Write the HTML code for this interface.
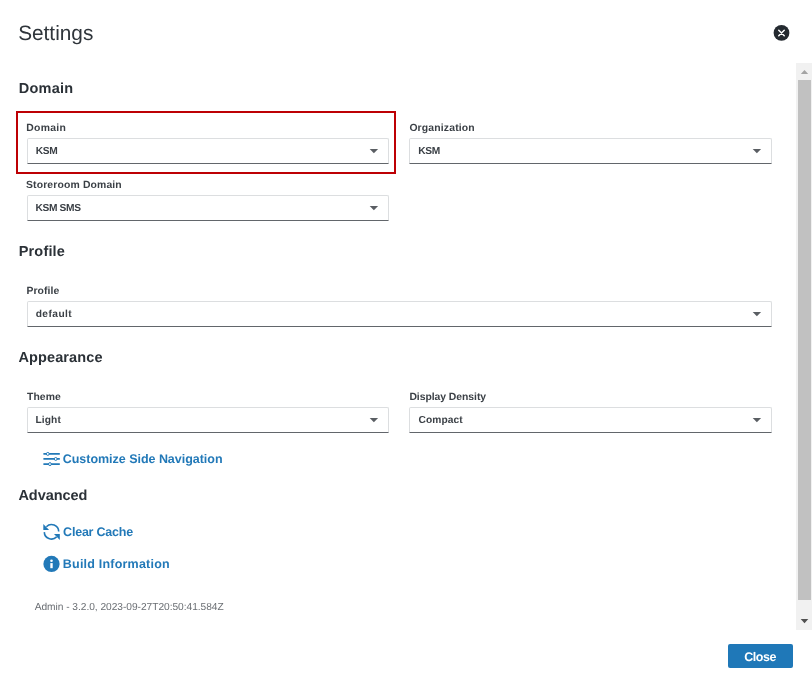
<!DOCTYPE html>
<html lang="en">
<head>
<meta charset="utf-8">
<title>Settings</title>
<style>
html,body{margin:0;padding:0;background:#fff}
body{width:812px;height:692px;position:relative;overflow:hidden;font-family:"Liberation Sans", Arial, sans-serif;-webkit-font-smoothing:antialiased;text-rendering:geometricPrecision}
.t{position:absolute;display:block;white-space:nowrap;margin:0;padding:0;text-decoration:none;cursor:default}
#txt{position:absolute;left:0;top:0;width:812px;height:692px;will-change:transform}
.sel{position:absolute;height:26px;box-sizing:border-box;background:#fff;border:1px solid #dcdee0;border-bottom:1px solid #62666b;border-radius:2px 2px 0 0}
#hl{position:absolute;left:16px;top:111px;width:380px;height:63px;box-sizing:border-box;border:2px solid #bd0004}
#track{position:absolute;left:796px;top:63px;width:16px;height:567px;background:#f1f1f1}
#thumb{position:absolute;left:798px;top:80px;width:13px;height:520px;background:#c1c1c1}
#btn{position:absolute;left:728px;top:644px;width:65px;height:24px;background:#1f78b8;border-radius:2px}
svg{position:absolute;overflow:visible}
#t_title{left:18.15px;top:20.00px;font-size:20.8px;line-height:27px;font-weight:400;color:#2f353b;letter-spacing:0.004px}
#h_domain{left:18.78px;top:79.00px;font-size:14.5px;line-height:20px;font-weight:700;color:#2b3137;letter-spacing:0.252px}
#h_profile{left:18.71px;top:242.00px;font-size:14.5px;line-height:20px;font-weight:700;color:#2b3137;letter-spacing:0.169px}
#h_appear{left:18.45px;top:347.80px;font-size:14.5px;line-height:20px;font-weight:700;color:#2b3137;letter-spacing:0.111px}
#h_adv{left:18.45px;top:485.70px;font-size:14.5px;line-height:20px;font-weight:700;color:#2b3137;letter-spacing:-0.053px}
#l_domain{left:26.22px;top:121.00px;font-size:10.4px;line-height:15px;font-weight:700;color:#3b4046;letter-spacing:0.320px}
#l_org{left:409.38px;top:121.00px;font-size:10.4px;line-height:15px;font-weight:700;color:#3b4046;letter-spacing:0.166px}
#l_store{left:26.00px;top:178.00px;font-size:10.4px;line-height:15px;font-weight:700;color:#3b4046;letter-spacing:0.146px}
#l_profile{left:26.43px;top:284.00px;font-size:10.4px;line-height:15px;font-weight:700;color:#3b4046;letter-spacing:0.098px}
#l_theme{left:27.00px;top:390.00px;font-size:10.4px;line-height:15px;font-weight:700;color:#3b4046;letter-spacing:0.088px}
#l_density{left:409.43px;top:390.00px;font-size:10.4px;line-height:15px;font-weight:700;color:#3b4046;letter-spacing:-0.052px}
#v_domain{left:35.73px;top:143.90px;font-size:10.2px;line-height:15px;font-weight:700;color:#3b4046;letter-spacing:-0.300px}
#v_org{left:418.16px;top:143.90px;font-size:10.2px;line-height:15px;font-weight:700;color:#3b4046;letter-spacing:-0.300px}
#v_store{left:35.46px;top:200.90px;font-size:10.2px;line-height:15px;font-weight:700;color:#3b4046;letter-spacing:-0.325px}
#v_profile{left:35.66px;top:306.90px;font-size:10.2px;line-height:15px;font-weight:700;color:#3b4046;letter-spacing:0.446px}
#v_theme{left:35.46px;top:412.90px;font-size:10.2px;line-height:15px;font-weight:700;color:#3b4046;letter-spacing:0.108px}
#v_density{left:418.52px;top:412.90px;font-size:10.2px;line-height:15px;font-weight:700;color:#3b4046;letter-spacing:0.085px}
#a_custom{left:62.77px;top:450.00px;font-size:12.5px;line-height:18px;font-weight:700;color:#2279b8;letter-spacing:-0.029px}
#a_clear{left:63.08px;top:522.80px;font-size:12.5px;line-height:18px;font-weight:700;color:#2279b8;letter-spacing:-0.215px}
#a_build{left:62.81px;top:554.90px;font-size:12.5px;line-height:18px;font-weight:700;color:#2279b8;letter-spacing:0.212px}
#t_admin{left:34.65px;top:600.30px;font-size:10.2px;line-height:15px;font-weight:400;color:#6a6e73;letter-spacing:-0.032px}
#b_close{left:744.18px;top:648.10px;font-size:12.5px;line-height:18px;font-weight:700;color:#ffffff;letter-spacing:-0.409px}
</style>
</head>
<body>
<div id="hl"></div>
<div class="sel" style="left:27px;top:138px;width:362px"></div>
<div class="sel" style="left:409px;top:138px;width:363px"></div>
<div class="sel" style="left:27px;top:195px;width:362px"></div>
<div class="sel" style="left:27px;top:301px;width:745px"></div>
<div class="sel" style="left:27px;top:407px;width:362px"></div>
<div class="sel" style="left:409px;top:407px;width:363px"></div>
<div id="btn"></div>
<div id="txt">
<h1 class="t" id="t_title">Settings</h1>
<h2 class="t" id="h_domain">Domain</h2>
<h2 class="t" id="h_profile">Profile</h2>
<h2 class="t" id="h_appear">Appearance</h2>
<h2 class="t" id="h_adv">Advanced</h2>
<label class="t" id="l_domain">Domain</label>
<label class="t" id="l_org">Organization</label>
<label class="t" id="l_store">Storeroom Domain</label>
<label class="t" id="l_profile">Profile</label>
<label class="t" id="l_theme">Theme</label>
<label class="t" id="l_density">Display Density</label>
<span class="t" id="v_domain">KSM</span>
<span class="t" id="v_org">KSM</span>
<span class="t" id="v_store">KSM SMS</span>
<span class="t" id="v_profile">default</span>
<span class="t" id="v_theme">Light</span>
<span class="t" id="v_density">Compact</span>
<a class="t" id="a_custom">Customize Side Navigation</a>
<a class="t" id="a_clear">Clear Cache</a>
<a class="t" id="a_build">Build Information</a>
<div class="t" id="t_admin">Admin - 3.2.0, 2023-09-27T20:50:41.584Z</div>
<div class="t" id="b_close">Close</div>
</div>
<svg id="icons" style="left:0;top:0" width="812" height="692" viewBox="0 0 812 692">
<g id="ic_close" transform="translate(773.5 24.9)"><circle cx="8" cy="8" r="7.9" fill="#242a30"/><path d="M5.25 5.25 L10.75 10.75 M10.75 5.25 L5.25 10.75" stroke="#fff" stroke-width="1.45" stroke-linecap="round" fill="none"/></g>
<g id="ic_sliders" transform="translate(43 451)" stroke="#2279b8" stroke-width="1.7" fill="none"><path d="M0.4 2.9H16.8M0.4 7.97H16.8M0.4 13.1H16.8"/><circle cx="4.8" cy="2.9" r="1.45" fill="#fff" stroke-width="1"/><circle cx="12.7" cy="7.97" r="1.45" fill="#fff" stroke-width="1"/><circle cx="6.95" cy="13.1" r="1.45" fill="#fff" stroke-width="1"/></g>
<g id="ic_refresh" transform="translate(43.5 523.8)"><g fill="none" stroke="#2279b8" stroke-width="1.6"><path d="M2.9 2.9A7.2 7.2 0 0 1 15.2 7.8"/><path d="M0.8 8.3A7.2 7.2 0 0 0 13.1 13.1"/></g><path d="M-0.2 0.1V6.1H5.6Z" fill="#2279b8"/><path d="M16.3 16.1V10.2H10.5Z" fill="#2279b8"/></g>
<g id="ic_info" transform="translate(43.5 555.9)"><circle cx="8" cy="8" r="8.1" fill="#2279b8"/><circle cx="8" cy="4.9" r="1.3" fill="#fff"/><path d="M6.8 7.2H9.2V12.3H6.8Z" fill="#fff"/></g>
</svg>
<div id="track"></div><div id="thumb"></div>
<svg id="arrows" style="left:0;top:0" width="812" height="692" viewBox="0 0 812 692">
<path d="M369.70 148.90H378.10L373.90 153.20Z" fill="#5a5e63"/>
<path d="M752.70 148.90H761.10L756.90 153.20Z" fill="#5a5e63"/>
<path d="M369.70 205.90H378.10L373.90 210.20Z" fill="#5a5e63"/>
<path d="M752.70 311.90H761.10L756.90 316.20Z" fill="#5a5e63"/>
<path d="M369.70 417.90H378.10L373.90 422.20Z" fill="#5a5e63"/>
<path d="M752.70 417.90H761.10L756.90 422.20Z" fill="#5a5e63"/>
<path d="M800.8 74H808.2L804.5 69.9Z" fill="#a3a3a3"/>
<path d="M800.7 618.9H808.3L804.5 623.3Z" fill="#505050"/>
</svg>
</body>
</html>
